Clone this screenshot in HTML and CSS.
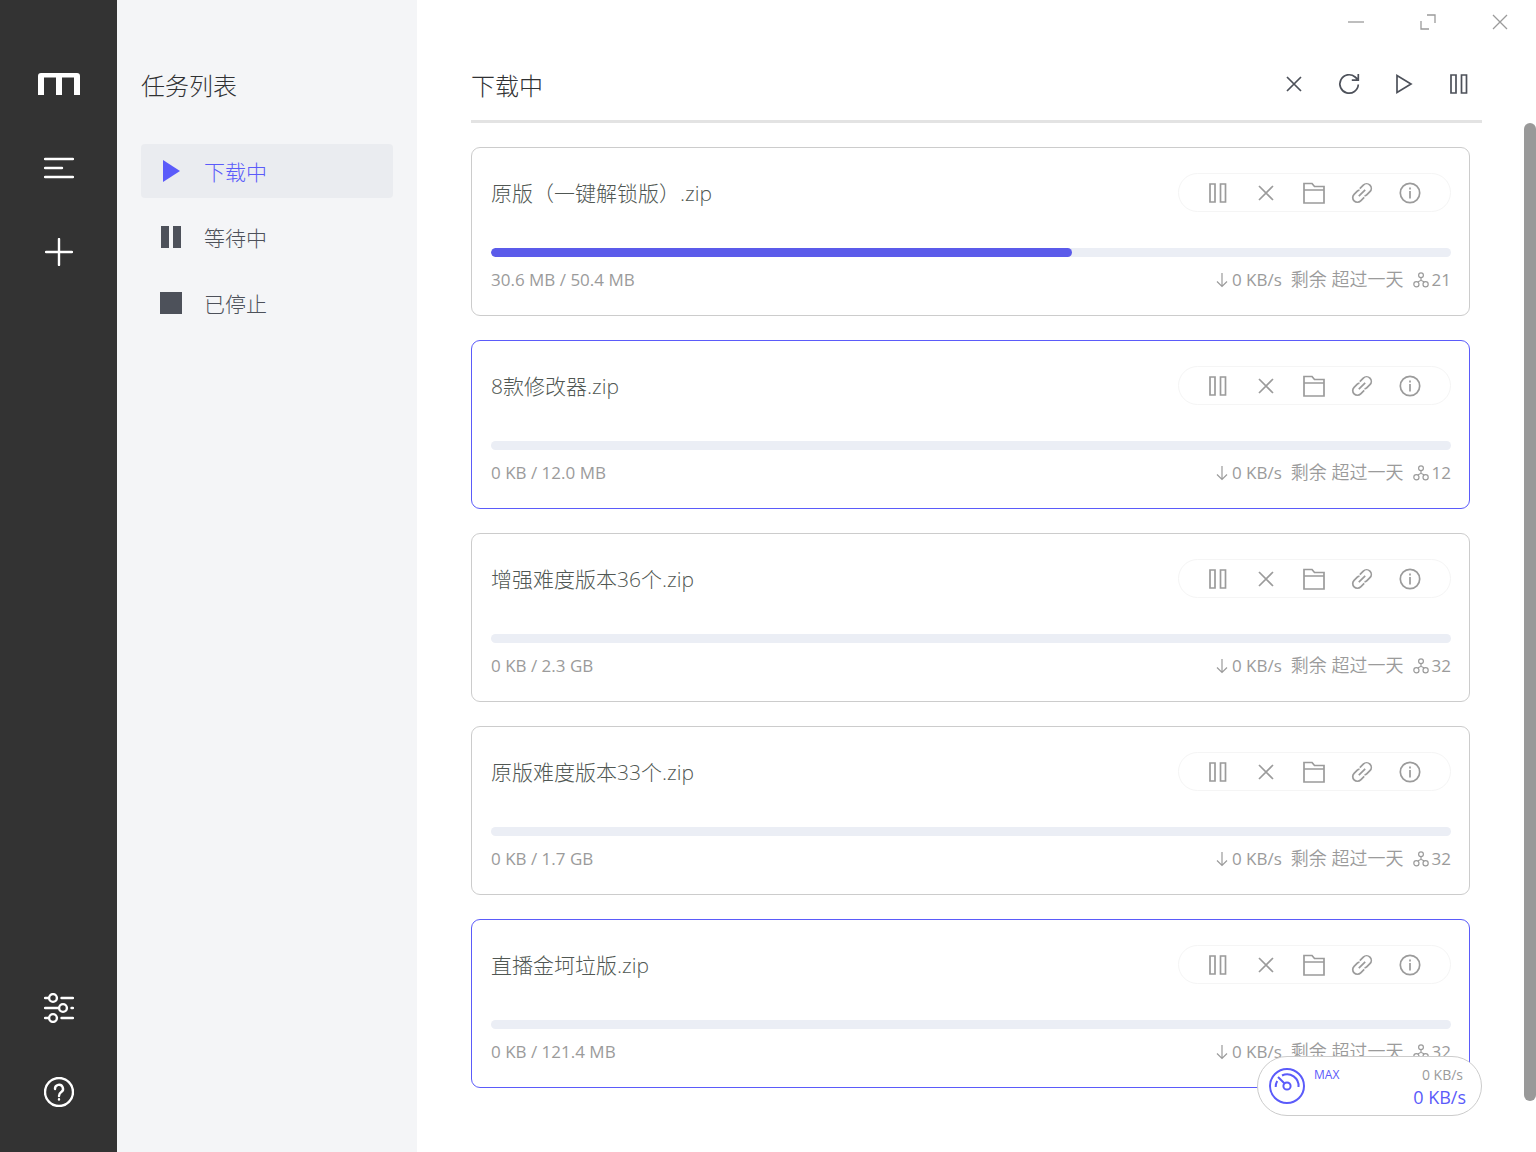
FILE: index.html
```html
<!DOCTYPE html>
<html lang="zh-CN">
<head>
  <meta charset="utf-8">
  <title>下载中</title>
  <link rel="stylesheet" href="styles.css">
</head>
<body>
  <!-- icons -->
  <svg class="sprite" aria-hidden="true">
    <symbol id="i-pause" viewBox="0 0 24 24"><path d="M4 3h5v18H4zM14.500 3h5v18h-5z"/></symbol>
    <symbol id="i-close" viewBox="0 0 24 24"><path d="M5 5l14 14M19 5L5 19"/></symbol>
    <symbol id="i-folder" viewBox="0 0 24 24"><path d="M2 2.500h8l2.500 3h9.500v16.500H2zM2 9h20"/></symbol>
    <symbol id="i-link" viewBox="0 0 24 24"><path d="M8.800 15.200l6.400-6.400M9.800 7.600l3.500-3.500a4.400 4.400 0 0 1 6.600 6.600l-3.200 3.200c-.6.600-1.400.9-2.200 1M14.200 16.400l-3.500 3.500a4.400 4.400 0 0 1-6.600-6.600l3.200-3.200c.6-.6 1.400-.9 2.200-1"/></symbol>
    <symbol id="i-info" viewBox="0 0 24 24"><circle cx="12" cy="12" r="9.700"/><path d="M12 10v7.500M12 6.500v2"/></symbol>
    <symbol id="i-refresh" viewBox="0 0 24 24"><path d="M21.300 12.500a9.200 9.200 0 1 1-3.200-7.500l2.200 2M21.300 2v6.200h-6.500"/></symbol>
    <symbol id="i-play" viewBox="0 0 24 24"><path d="M5 3.500v17l14-8.500z"/></symbol>
    <symbol id="i-down" viewBox="0 0 14 16"><path d="M7 1v13.500M2 9.500l5 5 5-5"/></symbol>
    <symbol id="i-nodes" viewBox="0 0 16 16"><circle cx="8" cy="3.300" r="2.400"/><circle cx="3.400" cy="12.300" r="2.600"/><circle cx="12.600" cy="12.300" r="2.600"/><path d="M8 5.700v2.800M4.700 10L8 8.300l3.300 1.700"/></symbol>
  </svg>

  <div class="app">
    <aside class="aside">
      <nav class="aside-group">
        <a href="#" class="aside-btn" aria-label="Home">
          <svg width="42" height="22" viewBox="0 0 42 22"><path fill="#fff" d="M3 0h36q3 0 3 3v19h-6V4.500H24V22h-6V4.500H6V22H0V3q0-3 3-3z"/></svg>
        </a>
        <button class="aside-btn" aria-label="任务">
          <svg width="30" height="22" viewBox="0 0 30 22"><path class="line" d="M1 2h28M1 11h17M1 20h28"/></svg>
        </button>
        <button class="aside-btn" aria-label="新建">
          <svg width="28" height="28" viewBox="0 0 28 28"><path class="line" d="M14 1v26M1 14h26"/></svg>
        </button>
      </nav>
      <nav class="aside-group">
        <button class="aside-btn" aria-label="设置">
          <svg width="30" height="30" viewBox="0 0 30 30"><g class="line"><circle cx="9" cy="5" r="3.900"/><circle cx="19" cy="15" r="3.900"/><circle cx="9" cy="25" r="3.900"/><path d="M1 5h3M17.500 5H29M1 15h13M27.500 15H29M1 25h3M17.500 25H29"/></g></svg>
        </button>
        <button class="aside-btn" aria-label="帮助">
          <svg width="30" height="30" viewBox="0 0 30 30"><g class="line"><circle cx="15" cy="15" r="14"/><path d="M11 12a4 4 0 1 1 6 3.300c-1.500 1-2 1.700-2 3.700M15 22.300v.2"/></g></svg>
        </button>
      </nav>
    </aside>

    <section class="subnav">
      <h2>任务列表</h2>
      <ul>
        <li><a href="#" class="active"><svg width="24" height="24" viewBox="0 0 24 24"><path d="M4 1l17 11L4 23z"/></svg>下载中</a></li>
        <li><a href="#"><svg width="24" height="24" viewBox="0 0 24 24"><path d="M2 1h8v22H2zM14 1h8v22h-8z"/></svg>等待中</a></li>
        <li><a href="#"><svg width="24" height="24" viewBox="0 0 24 24"><path d="M1 1h22v22H1z"/></svg>已停止</a></li>
      </ul>
    </section>

    <main class="main">
      <div class="titlebar">
        <button aria-label="最小化"><svg width="16" height="16" viewBox="0 0 16 16"><path d="M0 8h16"/></svg></button>
        <button aria-label="最大化"><svg width="16" height="16" viewBox="0 0 16 16"><path d="M7 1h8v8M1 7v8h8"/></svg></button>
        <button aria-label="关闭"><svg width="16" height="16" viewBox="0 0 16 16"><path d="M1 1l14 14M15 1L1 15"/></svg></button>
      </div>

      <header class="panel-header">
        <h1>下载中</h1>
        <div class="panel-actions">
          <button aria-label="删除"><svg><use href="#i-close"/></svg></button>
          <button aria-label="刷新"><svg><use href="#i-refresh"/></svg></button>
          <button aria-label="全部开始"><svg><use href="#i-play"/></svg></button>
          <button aria-label="全部暂停"><svg><use href="#i-pause"/></svg></button>
        </div>
      </header>

      <div class="task-list" id="taskList"></div>
      <div class="scrollbar"><div class="thumb"></div></div>

      <div class="speedometer">
        <svg width="36" height="36" viewBox="0 0 36 36"><circle cx="18" cy="18" r="17"/><circle cx="18" cy="18" r="3.600"/><path d="M15.300 15.300L9 9M13 7.500a11.500 11.500 0 0 1 16.500 11.500M6.700 19a11.500 11.500 0 0 1 1.500-6"/></svg>
        <span class="mode">MAX</span>
        <div class="speeds">
          <span class="up">0 KB/s</span>
          <span class="down">0 KB/s</span>
        </div>
      </div>
    </main>
  </div>

  <script src="script.js"></script>
</body>
</html>
```
FILE: styles.css
```css
* {
  box-sizing: border-box;
}

body {
  margin: 0;
  font-family: "Open Sans", "Noto Sans CJK SC", sans-serif;
  color: #303133;
}

h1, h2, h3, ul {
  margin: 0;
  padding: 0;
  list-style: none;
}

a {
  text-decoration: none;
}

button {
  display: flex;
  align-items: center;
  justify-content: center;
  padding: 0;
  border: none;
  background: none;
  color: inherit;
  cursor: pointer;
}

svg {
  flex: none;
}

.sprite {
  position: absolute;
  width: 0;
  height: 0;
}

.app {
  display: flex;
  height: 100vh;
}

/* left bar */
.aside {
  flex: none;
  display: flex;
  flex-direction: column;
  justify-content: space-between;
  width: 117px;
  padding: 42px 0 18px;
  background: #333;
}

.aside-btn {
  display: flex;
  align-items: center;
  justify-content: center;
  width: 100%;
  height: 84px;
}

.line {
  fill: none;
  stroke: #fff;
  stroke-width: 2.4;
  stroke-linecap: round;
}

/* sub navigation */
.subnav {
  flex: none;
  width: 300px;
  padding: 68px 24px 0;
  background: #f4f5f7;
}

.subnav h2 {
  margin-bottom: 40px;
  font-size: 24px;
  line-height: 36px;
  font-weight: 300;
}

.subnav li {
  margin-bottom: 12px;
}

.subnav a {
  display: flex;
  align-items: center;
  gap: 21px;
  height: 54px;
  padding: 0 18px;
  border-radius: 4px;
  font-size: 21px;
  font-weight: 300;
  color: #4d515a;
}

.subnav a.active {
  background: #eaecf0;
  color: #5b5bfa;
}

.subnav svg {
  fill: currentColor;
}

/* main panel */
.main {
  position: relative;
  flex: 1;
  display: flex;
  flex-direction: column;
  min-width: 0;
  background: #fff;
}

.titlebar {
  flex: none;
  display: flex;
  justify-content: flex-end;
  height: 44px;
  color: #9b9b9b;
}

.titlebar button {
  width: 72px;
}

.titlebar svg {
  fill: none;
  stroke: currentColor;
  stroke-width: 1.3;
}

.panel-header {
  flex: none;
  display: flex;
  align-items: center;
  justify-content: space-between;
  height: 79px;
  margin: 0 54px;
  padding-top: 4px;
  border-bottom: 3px solid #e3e3e3;
}

.panel-header h1 {
  padding-top: 3px;
  font-size: 24px;
  line-height: 36px;
  font-weight: 300;
}

.panel-actions {
  display: flex;
  gap: 8px;
  color: #4d515a;
}

.panel-actions button {
  width: 47px;
  height: 36px;
}

.panel-actions svg,
.task-actions svg {
  width: 24px;
  height: 24px;
  fill: none;
  stroke: currentColor;
  stroke-width: 1.7;
}

.task-list {
  flex: 1;
  display: flex;
  flex-direction: column;
  gap: 24px;
  padding: 24px 66px 0 54px;
  overflow: hidden;
}

.task {
  flex: none;
  height: 169px;
  padding: 25px 18px 0 19px;
  border: 1px solid #ccc;
  border-radius: 9px;
}

.task.selected {
  border-color: #5b5bfa;
}

.task-head {
  display: flex;
  align-items: center;
  justify-content: space-between;
  margin-bottom: 36px;
}

.task-head h3 {
  font-size: 21px;
  line-height: 36px;
  font-weight: 300;
  color: #505753;
}

.task-actions {
  display: flex;
  align-items: center;
  height: 39px;
  padding: 0 16px 0 15px;
  border: 1px solid #f5f5f5;
  border-radius: 20px;
  color: #9b9b9b;
}

.task-actions button {
  width: 48px;
  height: 36px;
}

.bar {
  height: 9px;
  border-radius: 5px;
  background: #ebeef5;
  overflow: hidden;
}

.bar-inner {
  height: 100%;
  border-radius: 5px;
  background: #5b5bea;
}

.task-info {
  display: flex;
  align-items: center;
  justify-content: space-between;
  margin-top: 9px;
  font-size: 17px;
  line-height: 27px;
  color: #9b9b9b;
}

.task-info div {
  display: flex;
  align-items: center;
  gap: 9px;
}

.task-info div span {
  display: flex;
  align-items: center;
  gap: 3px;
}

.task-info .remaining {
  font-size: 18px;
  font-weight: 350;
}

.task-info svg {
  height: 16px;
  fill: none;
  stroke: currentColor;
  stroke-width: 1.2;
}

.i-down {
  width: 14px;
}

.i-nodes {
  width: 16px;
}

/* overlays */
.scrollbar {
  position: absolute;
  top: 123px;
  right: 0;
  bottom: 0;
  width: 12px;
}

.thumb {
  height: 95%;
  border-radius: 6px;
  background: #999;
}

.speedometer {
  position: absolute;
  right: 54px;
  bottom: 36px;
  display: flex;
  align-items: center;
  width: 225px;
  height: 60px;
  padding: 0 15px 0 11px;
  border: 1px solid #ccc;
  border-radius: 30px;
  background: #fff;
  color: #5b5bfa;
}

.speedometer svg {
  fill: none;
  stroke: currentColor;
  stroke-width: 2;
}

.mode {
  align-self: flex-start;
  margin: 9px auto 0 9px;
  font-size: 12px;
  line-height: 18px;
}

.speeds {
  display: flex;
  flex-direction: column;
  align-items: flex-end;
}

.up {
  padding-right: 3px;
  font-size: 14px;
  line-height: 21px;
  color: #9b9b9b;
}

.down {
  font-size: 18px;
  line-height: 24px;
}
```
FILE: script.js
```javascript
const tasks = [
  { name: "原版（一键解锁版）.zip", size: "30.6 MB / 50.4 MB", percent: 60.5, peers: 21 },
  { name: "8款修改器.zip", size: "0 KB / 12.0 MB", percent: 0, peers: 12, selected: true },
  { name: "增强难度版本36个.zip", size: "0 KB / 2.3 GB", percent: 0, peers: 32 },
  { name: "原版难度版本33个.zip", size: "0 KB / 1.7 GB", percent: 0, peers: 32 },
  { name: "直播金坷垃版.zip", size: "0 KB / 121.4 MB", percent: 0, peers: 32, selected: true }
];

const actions = [
  ["pause", "暂停"],
  ["close", "删除"],
  ["folder", "打开文件夹"],
  ["link", "复制链接"],
  ["info", "详情"]
];

let taskList = document.getElementById("taskList");

tasks.forEach(task => {
  taskList.innerHTML += `
    <article class="task ${task.selected ? "selected" : ""}">
      <div class="task-head">
        <h3>${task.name}</h3>
        <div class="task-actions">
          ${actions.map(([icon, label]) => `<button aria-label="${label}"><svg><use href="#i-${icon}"/></svg></button>`).join("")}
        </div>
      </div>
      <div class="bar"><div class="bar-inner" style="width: ${task.percent}%"></div></div>
      <div class="task-info">
        <span>${task.size}</span>
        <div>
          <span><svg class="i-down"><use href="#i-down"/></svg>0 KB/s</span>
          <span class="remaining">剩余 超过一天</span>
          <span><svg class="i-nodes"><use href="#i-nodes"/></svg>${task.peers}</span>
        </div>
      </div>
    </article>
  `;
});
```
